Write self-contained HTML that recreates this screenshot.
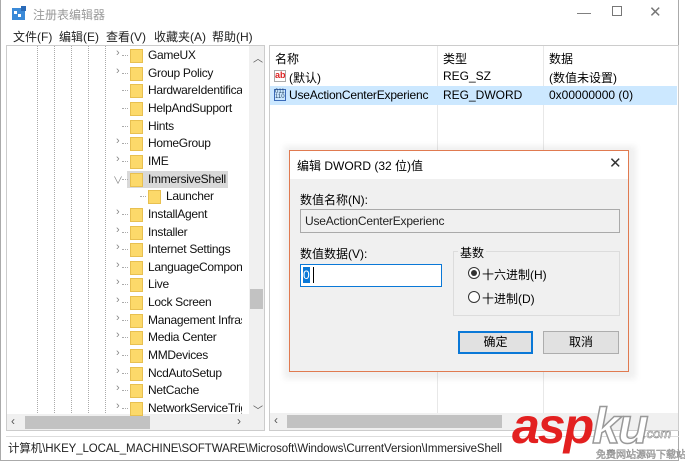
<!DOCTYPE html><html><head><meta charset="utf-8"><style>
*{margin:0;padding:0;box-sizing:border-box}
body{width:685px;height:463px;background:#fff;font-family:"Liberation Sans","Noto Sans CJK SC",sans-serif;font-size:12px;color:#000;position:relative;overflow:hidden}
.a{position:absolute;white-space:nowrap}
.fold{position:absolute;width:13px;height:14px;background:#fcd96a;border:1px solid #e8c050;top:2px}
.exp{position:absolute;color:#888;font-size:11px;top:0}
.vl{position:absolute;border-left:1px dotted #aaa;top:45px;height:375px}
.btn{position:absolute;height:23px;line-height:21px;text-align:center;background:#e1e1e1;border:1px solid #adadad}
</style></head><body>
<div class="a" style="left:0;top:0;width:679px;height:461px;border:1px solid #aaa;border-top:none"></div>
<svg class="a" style="left:12px;top:6px" width="15" height="15"><rect x="0" y="2" width="13" height="12" fill="#3a8ad8"/><rect x="2" y="5" width="3" height="3" fill="#fff"/><rect x="6" y="8" width="3" height="3" fill="#fff"/><rect x="9" y="0" width="5" height="5" fill="#2a6ab8"/></svg>
<div class="a" style="left:33px;top:6px;color:#999;font-size:12px">注册表编辑器</div>
<div class="a" style="left:577px;top:4px;color:#777;font-size:14px">—</div>
<div class="a" style="left:612px;top:6px;width:10px;height:10px;border:1px solid #777"></div>
<div class="a" style="left:649px;top:3px;color:#777;font-size:15px">✕</div>
<div class="a" style="left:13px;top:28px;color:#222">文件(F)</div>
<div class="a" style="left:59px;top:28px;color:#222">编辑(E)</div>
<div class="a" style="left:106px;top:28px;color:#222">查看(V)</div>
<div class="a" style="left:154px;top:28px;color:#222">收藏夹(A)</div>
<div class="a" style="left:212px;top:28px;color:#222">帮助(H)</div>
<div class="a" style="left:6px;top:45px;width:259px;height:386px;border:1px solid #ccc;overflow:hidden">
<div class="vl" style="left:30px;top:0"></div><div class="vl" style="left:47px;top:0"></div><div class="vl" style="left:64px;top:0"></div><div class="vl" style="left:81px;top:0"></div><div class="vl" style="left:98px;top:0"></div>
<div class="a" style="left:242px;top:0;width:15px;height:368px;background:#f0f0f0"></div>
<div class="a" style="left:246px;top:4px;color:#555;font-size:10px">︿</div>
<div class="a" style="left:243px;top:243px;width:13px;height:20px;background:#c2c2c2"></div>
<div class="a" style="left:246px;top:356px;color:#555;font-size:10px">﹀</div>
<div class="a" style="left:0;top:368px;width:257px;height:16px;background:#f0f0f0"></div>
<div class="a" style="left:18px;top:370px;width:125px;height:13px;background:#c2c2c2"></div>
<div class="a" style="left:4px;top:368px;color:#555">‹</div><div class="a" style="left:230px;top:368px;color:#555">›</div>
</div>
<div id="tree"></div>
<div class="a" style="left:269px;top:45px;width:410px;height:386px;border:1px solid #ccc"></div>
<div class="a" style="left:437px;top:46px;height:368px;border-left:1px solid #e8e8e8"></div>
<div class="a" style="left:543px;top:46px;height:368px;border-left:1px solid #e8e8e8"></div>
<div class="a" style="left:275px;top:50px">名称</div><div class="a" style="left:443px;top:50px">类型</div><div class="a" style="left:549px;top:50px">数据</div>
<div class="a" style="left:274px;top:70px;width:12px;height:12px;border:1px solid #aaa;font-size:9px;color:#d22;line-height:9px;font-weight:bold">ab</div>
<div class="a" style="left:289px;top:69px">(默认)</div><div class="a" style="left:443px;top:69px">REG_SZ</div><div class="a" style="left:549px;top:69px">(数值未设置)</div>
<div class="a" style="left:270px;top:86px;width:407px;height:19px;background:#cce8ff"></div>
<div class="a" style="left:274px;top:89px;width:12px;height:12px;border:1px solid #3a6ab8;font-size:6px;color:#246;line-height:5px">011<br>110</div>
<div class="a" style="left:289px;top:88px;letter-spacing:-0.2px">UseActionCenterExperienc</div><div class="a" style="left:443px;top:88px">REG_DWORD</div><div class="a" style="left:549px;top:88px">0x00000000 (0)</div>
<div class="a" style="left:270px;top:413px;width:408px;height:17px;background:#f0f0f0"></div>
<div class="a" style="left:287px;top:415px;width:215px;height:13px;background:#c2c2c2"></div>
<div class="a" style="left:274px;top:413px;color:#555">‹</div>
<div class="a" style="left:6px;top:436px;width:673px;border-top:1px solid #ddd"></div>
<div class="a" style="left:8px;top:440px;font-size:11.5px;color:#222;letter-spacing:-0.1px">计算机\HKEY_LOCAL_MACHINE\SOFTWARE\Microsoft\Windows\CurrentVersion\ImmersiveShell</div>
<div class="a" style="left:512px;top:396px;font-size:50px;font-weight:bold;font-style:italic;color:#e32020;letter-spacing:-2px;line-height:60px">asp<span style="color:#fff;-webkit-text-stroke:1.5px #999">ku</span></div>
<div class="a" style="left:643px;top:426px;font-size:13px;font-style:italic;color:#fff;-webkit-text-stroke:.6px #888">.com</div>
<div class="a" style="left:596px;top:446px;font-size:10px;color:#fff;-webkit-text-stroke:.5px #888">免费网站源码下载站</div>
<div class="a" style="left:284px;top:146px;width:352px;height:233px;background:rgba(0,0,0,.06);filter:blur(3px)"></div>
<div class="a" style="left:289px;top:150px;width:340px;height:222px;background:#f0f0f0;border:1px solid #e07a50"></div>
<div class="a" style="left:290px;top:151px;width:338px;height:28px;background:#fff"></div>
<div class="a" style="left:297px;top:157px">编辑 DWORD (32 位)值</div>
<div class="a" style="left:609px;top:154px;font-size:15px;color:#333">✕</div>
<div class="a" style="left:300px;top:191px">数值名称(N):</div>
<div class="a" style="left:300px;top:209px;width:320px;height:24px;background:#f0f0f0;border:1px solid #aaa;padding:4px 4px;color:#222;letter-spacing:-0.2px">UseActionCenterExperienc</div>
<div class="a" style="left:300px;top:245px">数值数据(V):</div>
<div class="a" style="left:300px;top:264px;width:142px;height:23px;background:#fff;border:1px solid #0a78d7"></div>
<div class="a" style="left:303px;top:267px;width:7px;height:16px;background:#0a78d7;color:#fff;font-size:12px;line-height:16px">0</div>
<div class="a" style="left:313px;top:267px;width:1px;height:16px;background:#000"></div>
<div class="a" style="left:453px;top:251px;width:167px;height:65px;border:1px solid #dcdcdc"></div>
<div class="a" style="left:458px;top:244px;background:#f0f0f0;padding:0 2px">基数</div>
<div class="a" style="left:468px;top:267px;width:12px;height:12px;border:1px solid #333;border-radius:50%;background:#fff"><div style="margin:2px;width:6px;height:6px;border-radius:50%;background:#333"></div></div>
<div class="a" style="left:482px;top:266px">十六进制(H)</div>
<div class="a" style="left:468px;top:291px;width:12px;height:12px;border:1px solid #333;border-radius:50%;background:#fff"></div>
<div class="a" style="left:482px;top:290px">十进制(D)</div>
<div class="btn" style="left:458px;top:331px;width:75px;border:1px solid #0a78d7;box-shadow:inset 0 0 0 1px #0a78d7">确定</div>
<div class="btn" style="left:543px;top:331px;width:76px">取消</div>
<script>
var items=[["GameUX",1],["Group Policy",1],["HardwareIdentificat",0],["HelpAndSupport",0],["Hints",0],["HomeGroup",1],["IME",1],["ImmersiveShell",2],["Launcher",3],["InstallAgent",1],["Installer",1],["Internet Settings",1],["LanguageCompone",1],["Live",1],["Lock Screen",1],["Management Infras",1],["Media Center",1],["MMDevices",1],["NcdAutoSetup",1],["NetCache",1],["NetworkServiceTrig",1]];
var h="";items.forEach(function(it,i){var y=46+i*17.65;var t=it[1];var fx=t==3?148:130;
if(t==1)h+='<div class="a exp" style="left:116px;top:'+(y+1)+'px">›</div>';
if(t==2)h+='<div class="a exp" style="left:113px;top:'+(y+2)+'px;font-size:10px">∨</div><div class="a" style="left:127px;top:'+(y+1)+'px;width:101px;height:17px;background:#d9d9d9"></div>';
h+='<div class="a" style="left:'+(fx-8)+'px;top:'+(y+9)+'px;width:6px;border-top:1px dotted #aaa"></div>';
h+='<div class="fold" style="left:'+fx+'px;top:'+(y+3)+'px"></div><div class="a" style="left:'+(fx+18)+'px;top:'+(y+2)+'px;width:'+(242-fx-18)+'px;overflow:hidden;color:#111;letter-spacing:-0.3px">'+it[0]+'</div>';});
document.getElementById("tree").innerHTML=h;
</script>
</body></html>
